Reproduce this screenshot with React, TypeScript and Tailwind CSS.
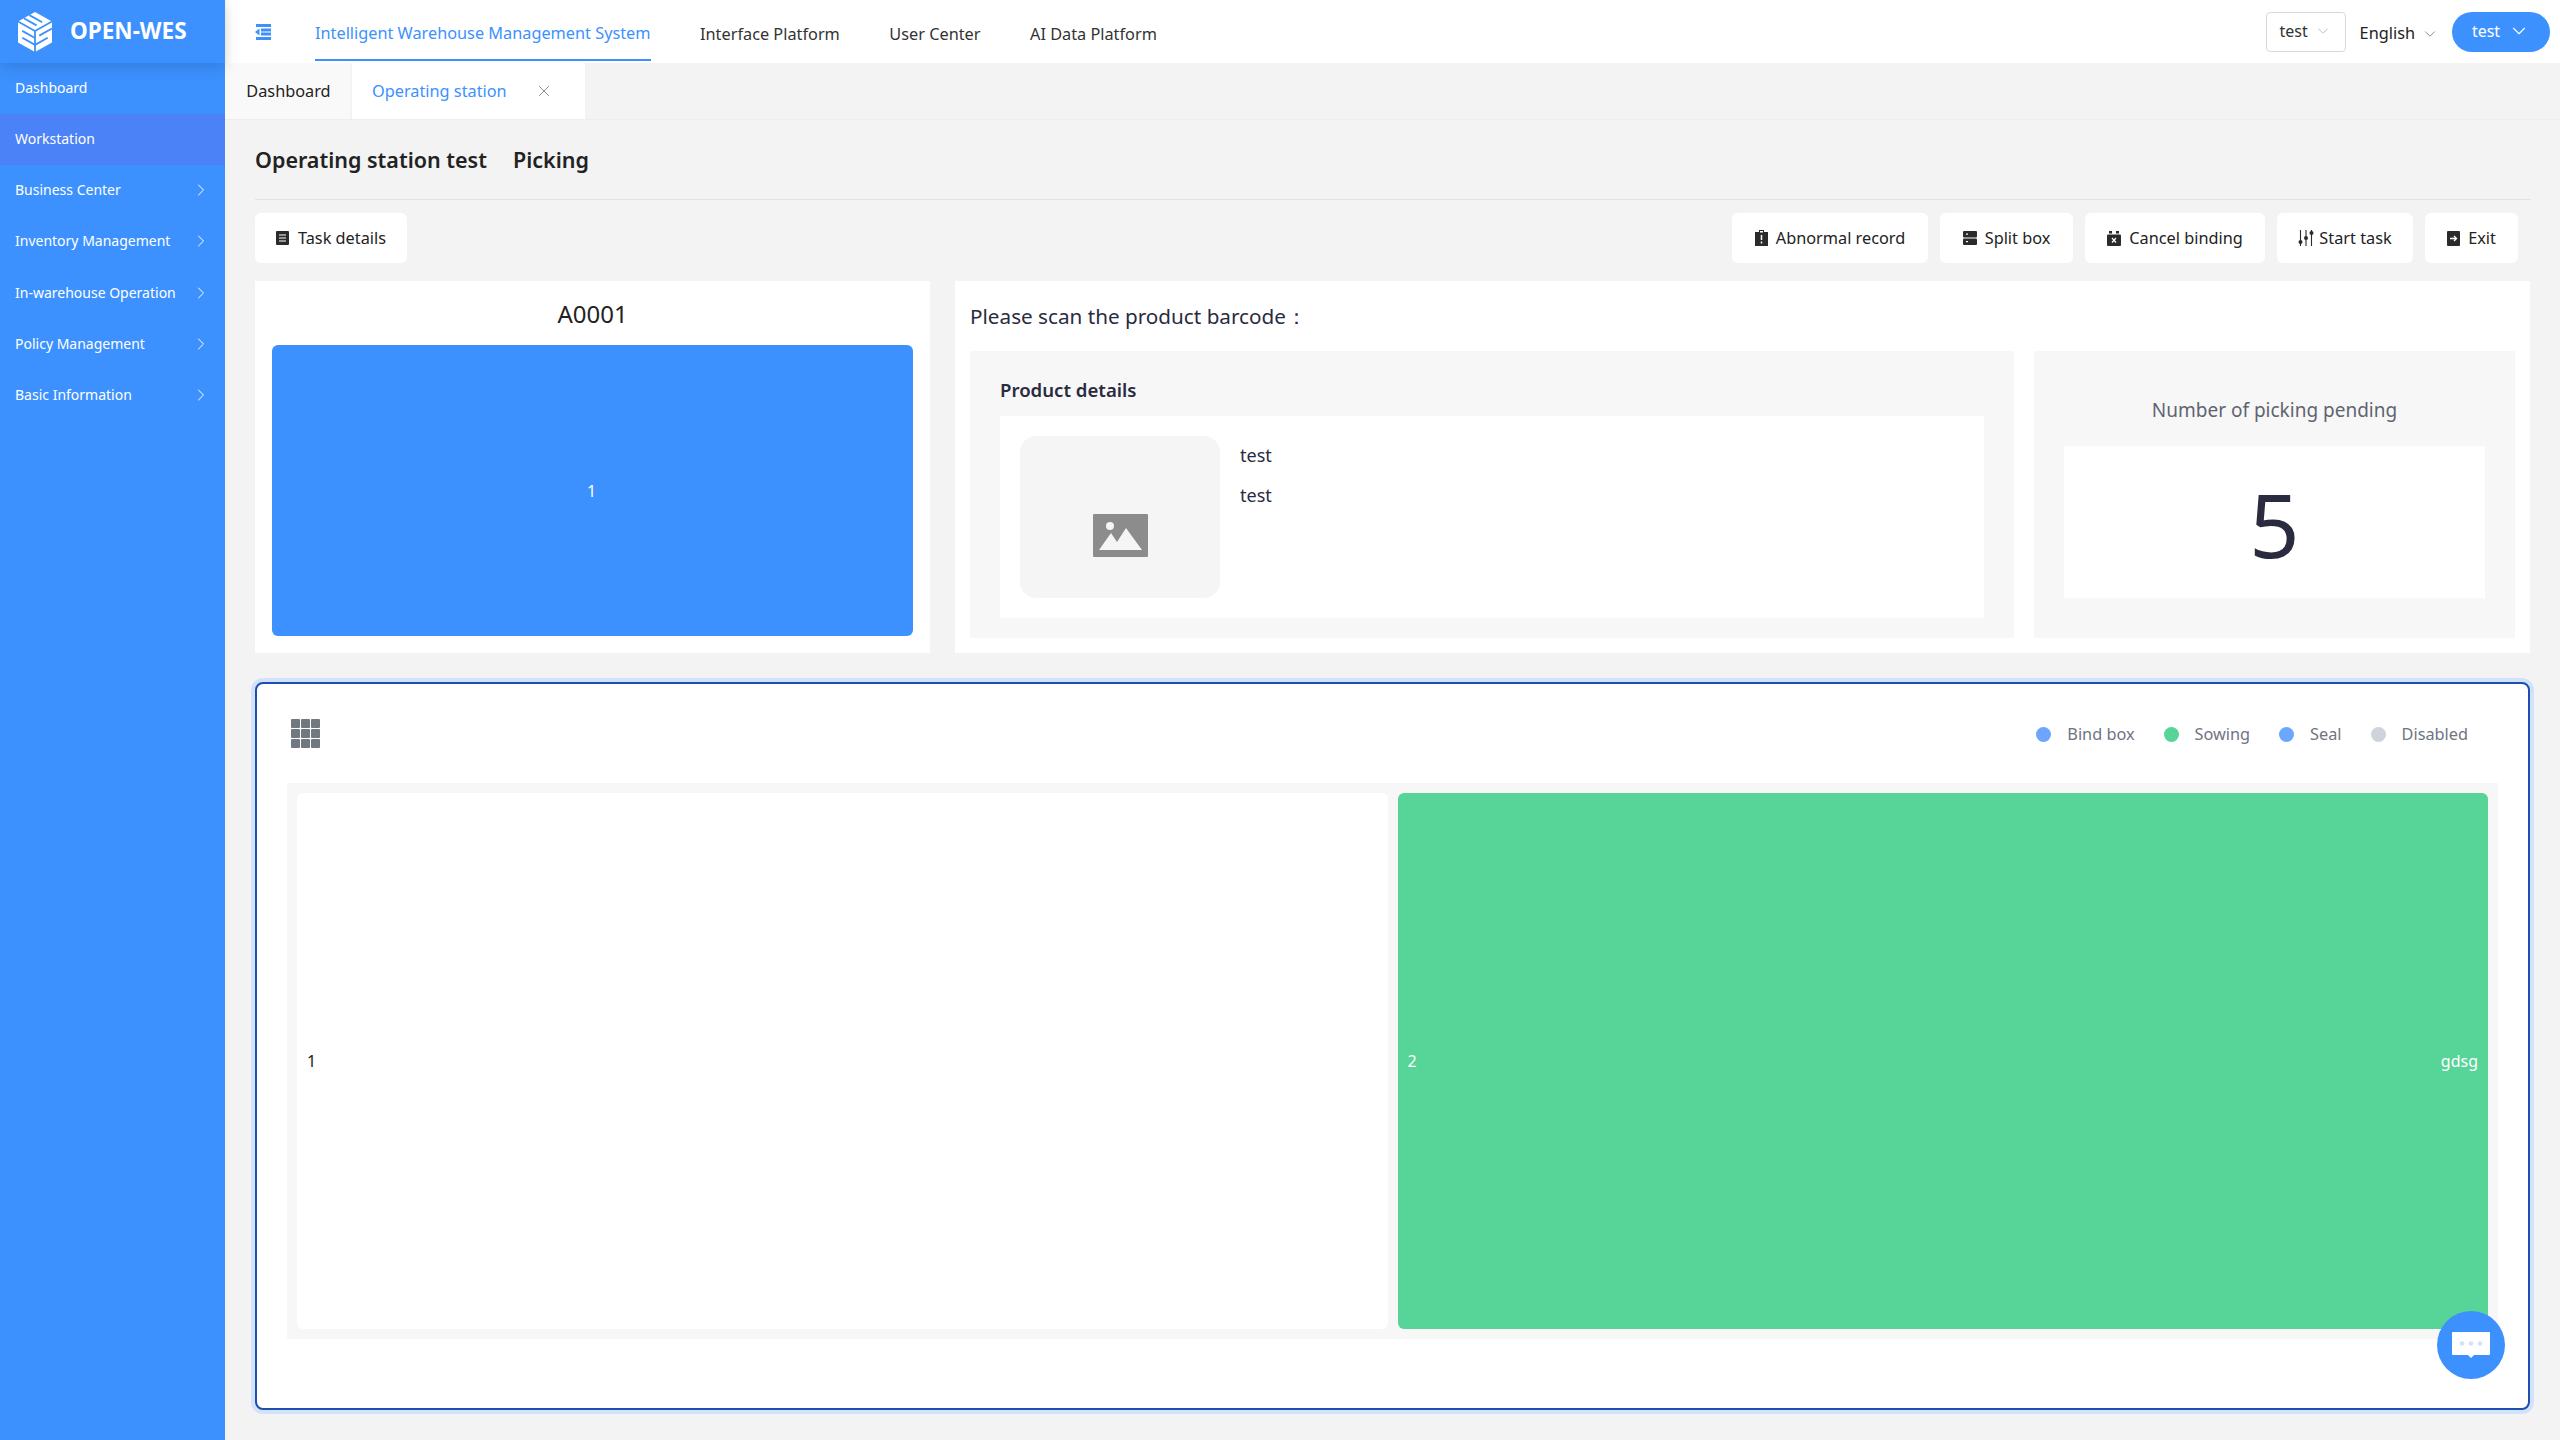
import { ChevronDown, ChevronRight, X } from "lucide-react";

const FONT = "font-['Noto_Sans',sans-serif]";
const MENU = ["Business Center", "Inventory Management", "In-warehouse Operation", "Policy Management", "Basic Information"];

function Logo() {
  return (
    <svg width="34" height="40" viewBox="0 0 34 40" fill="white">
      <path d="M17 0 34 9.500v21L17 40 0 30.500v-21z" />
      <g stroke="#3c91ff" strokeWidth="1.800" fill="none">
        {/* face seams */}
        <path d="M17 19v21M0 9.500 17 19 34 9.500" />
        {/* top face */}
        <path d="M11.400 3.100 24.150 10.200M5.800 6.300 18.550 13.400" />
        {/* left face */}
        <path d="M4.250 18.900 17 26M4.250 25.800 17 32.900" />
        {/* right face */}
        <path d="M21.250 23.600 34 16.500M17 32.900 29.750 25.700" />
      </g>
    </svg>
  );
}

function CollapseIcon() {
  return (
    <svg width="16" height="16" viewBox="0 0 16 16" fill="#3c91ff">
      <rect x="1" y="0" width="15" height="3" />
      <rect x="1" y="13" width="15" height="3" />
      <rect x="6" y="4.500" width="10" height="3" />
      <rect x="6" y="8.500" width="10" height="3" />
      <path d="M4.500 4.500v7L0 8z" />
    </svg>
  );
}

function ImageIcon() {
  return (
    <svg width="55" height="43" viewBox="0 0 55 43">
      <rect width="55" height="43" rx="1" fill="#8c8c8c" />
      <circle cx="17" cy="12" r="4" fill="#f5f5f5" />
      <path d="M6 36 18 19l6 9 9-14 16 22z" fill="#f5f5f5" />
    </svg>
  );
}

function GridIcon() {
  return (
    <svg width="29" height="29" viewBox="0 0 29 29" fill="#72787f">
      {[0, 10, 20].map((y) =>
        [0, 10, 20].map((x) => <rect key={`${x}-${y}`} x={x} y={y} width="9" height="9" rx="1" />)
      )}
    </svg>
  );
}

function BtnIcon({ name }: { name: string }) {
  const c = "#2b2b2b";
  if (name === "doc")
    return (
      <svg width="13" height="14" viewBox="0 0 13 14">
        <rect width="13" height="14" rx="1" fill={c} />
        <path d="M3 4h7M3 7h7M3 10h7" stroke="white" strokeWidth="1.200" />
      </svg>
    );
  if (name === "alert")
    return (
      <svg width="13" height="16" viewBox="0 0 13 16">
        <path d="M4 0h5v2h4v14H0V2h4z" fill={c} />
        <rect x="5" y="1" width="3" height="1.500" fill="white" />
        <path d="M6.500 5v5M6.500 11.500v2" stroke="white" strokeWidth="1.500" />
      </svg>
    );
  if (name === "split")
    return (
      <svg width="14" height="14" viewBox="0 0 14 14" fill={c}>
        <rect width="14" height="6.500" rx="1" />
        <rect y="7.500" width="14" height="6.500" rx="1" />
        <rect x="3" y="2.500" width="2" height="1.200" fill="white" />
        <rect x="3" y="10" width="2" height="1.200" fill="white" />
      </svg>
    );
  if (name === "cancel")
    return (
      <svg width="14" height="15" viewBox="0 0 14 15" fill={c}>
        <rect x="2" width="3" height="2.500" />
        <rect x="9" width="3" height="2.500" />
        <rect y="3.500" width="14" height="11.500" rx="1" />
        <path d="m5 7 4 4.500M9 7l-4 4.500" stroke="white" strokeWidth="1.200" />
      </svg>
    );
  if (name === "sliders")
    return (
      <svg width="16" height="16" viewBox="0 0 16 16" fill={c}>
        <path d="M2.500 0v16M8 0v16M13.500 0v16" stroke={c} strokeWidth="1.100" />
        <circle cx="2.500" cy="12" r="2" />
        <circle cx="8" cy="8" r="2" />
        <circle cx="13.500" cy="3" r="2" />
      </svg>
    );
  return (
    <svg width="13" height="15" viewBox="0 0 13 15">
      <rect width="13" height="15" rx="1" fill={c} />
      <path d="M3 7.500h6M7 5l2.500 2.500L7 10" stroke="white" strokeWidth="1.300" fill="none" />
    </svg>
  );
}

function ActionButton({ icon, label, gap = "gap-2", w }: { icon: string; label: string; gap?: string; w: string }) {
  return (
    <button className={`flex h-[50px] items-center justify-center rounded-md bg-white text-[16.3px] text-[#222] ${gap} ${w}`}>
      <BtnIcon name={icon} />
      {label}
    </button>
  );
}

function Legend({ color, label }: { color: string; label: string }) {
  return (
    <div className="flex items-center gap-4 text-[16.3px] text-[#6e7480]">
      <span className={`h-[15px] w-[15px] rounded-full ${color}`} />
      {label}
    </div>
  );
}

export default function App() {
  return (
    <div className={`flex h-[1440px] w-[2560px] overflow-hidden bg-[#f3f3f3] ${FONT}`}>
      {/* Sidebar */}
      <aside className="w-[225px] shrink-0 bg-[#3c91ff] text-sm text-white">
        <div className="relative z-10 flex h-[63px] items-center gap-[18px] pl-[18px] shadow-[0_6px_14px_rgba(0,0,0,0.12)]">
          <Logo />
          <span className="text-[22.500px] font-bold">OPEN-WES</span>
        </div>
        <div className="flex h-[51px] items-center px-[15px] pb-[2px]">Dashboard</div>
        <div className="flex h-[51px] items-center bg-[#4c82f7] px-[15px] pb-[1px]">Workstation</div>
        {MENU.map((m) => (
          <div key={m} className="flex h-[51.250px] items-center justify-between pb-[1px] pl-[15px] pr-[14px]">
            {m}
            <ChevronRight size={20} strokeWidth={1.200} />
          </div>
        ))}
      </aside>

      <div className="flex min-w-0 flex-1 flex-col">
        {/* Top nav */}
        <header className="flex h-[63px] items-center bg-white pl-[30px] pr-[10px] shadow-[inset_8px_0_8px_-8px_rgba(0,0,0,0.08)]">
          <CollapseIcon />
          <nav className="ml-[44px] flex h-full gap-[49.500px] text-[16.3px] text-[#333]">
            <div className="flex h-[61px] items-center border-b-2 border-[#3c91ff] pt-[7px] text-[#3c91ff]">Intelligent Warehouse Management System</div>
            <div className="flex items-center pt-[5px]">Interface Platform</div>
            <div className="flex items-center pt-[5px]">User Center</div>
            <div className="flex items-center pt-[5px]">AI Data Platform</div>
          </nav>
          <div className="ml-auto flex items-center text-base">
            <div className="flex h-[40px] w-[80px] items-center justify-center gap-[6px] rounded-sm border border-[#d9d9d9] pb-[2px] text-[#333]">
              test
              <ChevronDown size={18} strokeWidth={1} className="text-[#aaa]" />
            </div>
            <div className="ml-[14px] flex items-center gap-[6px] pt-1 text-[16.3px] text-[#222]">
              English
              <ChevronDown size={18} strokeWidth={1} className="text-[#666]" />
            </div>
            <div className="ml-[13px] flex h-[40px] w-[98px] items-center justify-center gap-[8px] rounded-[20px] bg-[#3c91ff] pb-[1px] text-white">
              test
              <ChevronDown size={22} strokeWidth={1.200} />
            </div>
          </div>
        </header>

        {/* Tabs */}
        <div className="flex h-[57px] items-stretch border-b border-[#eeeeee] text-[16.3px]">
          <div className="flex w-[125px] items-center justify-center bg-[#f9f9f9] pl-[2px] text-[#222]">Dashboard</div>
          <div className="ml-[2px] flex w-[233px] items-center gap-[28px] bg-white pl-[20px] text-[#3c91ff]">
            Operating station
            <X size={18} strokeWidth={1} className="text-[#666]" />
          </div>
        </div>

        {/* Page */}
        <main className="flex flex-1 flex-col pl-[30px] pr-[30px]">
          <div className="-mr-px flex h-[80px] items-center gap-[26px] border-b border-[#e3e3e3] pt-[2px] text-[21.500px] font-semibold text-[#222]">
            <span>Operating station test</span>
            <span>Picking</span>
          </div>

          <div className="mt-[13px] flex justify-between pr-[12px]">
            <ActionButton icon="doc" label="Task details" gap="gap-[9px]" w="w-[152px]" />
            <div className="flex gap-[12px]">
              <ActionButton icon="alert" label="Abnormal record" w="w-[196px]" />
              <ActionButton icon="split" label="Split box" w="w-[133px]" />
              <ActionButton icon="cancel" label="Cancel binding" w="w-[180px]" />
              <ActionButton icon="sliders" label="Start task" gap="gap-[5px]" w="w-[136px]" />
              <ActionButton icon="exit" label="Exit" w="w-[93px]" />
            </div>
          </div>

          <div className="mt-[18px] flex h-[372px] gap-[25px]">
            <section className="flex w-[675px] flex-col bg-white px-[17px] pb-[17px]">
              <div className="flex h-[64px] items-center justify-center pt-[2px] text-2xl text-[#222]">A0001</div>
              <div className="flex flex-1 items-center justify-center rounded-md bg-[#3c91ff] pr-[2px] text-base text-white">1</div>
            </section>
            <section className="flex flex-1 flex-col bg-white px-[15px] pb-[15px]">
              <div className="flex h-[70px] items-center pt-[1px] text-[20.700px] text-[#2a2b3f]">Please scan the product barcode：</div>
              <div className="flex flex-1 gap-[20px]">
                <div className="flex flex-1 flex-col bg-[#f7f7f7] px-[30px] pb-[20px]">
                  <div className="flex h-[65px] items-center pt-[12px] text-[18.600px] font-semibold text-[#2a2b3f]">Product details</div>
                  <div className="flex flex-1 gap-[20px] bg-white p-[20px]">
                    <div className="flex h-[162px] w-[200px] items-center justify-center rounded-2xl bg-[#f5f5f5] pt-[36px]">
                      <ImageIcon />
                    </div>
                    <div className="flex flex-col gap-[16px] pt-[7px] text-lg text-[#2a2b3f]">
                      <span className="leading-[24px]">test</span>
                      <span className="leading-[24px]">test</span>
                    </div>
                  </div>
                </div>
                <div className="flex w-[481px] flex-col bg-[#f7f7f7] px-[30px] pb-[40px]">
                  <div className="flex h-[95px] items-center justify-center pt-[23px] text-[19px] text-[#5f6470]">Number of picking pending</div>
                  <div className="flex flex-1 items-center justify-center bg-white pt-[3px] text-[88px] leading-none font-normal text-[#2a2b3f]">5</div>
                </div>
              </div>
            </section>
          </div>

          {/* Wall */}
          <section className="relative mt-[29px] flex h-[728px] flex-col rounded-lg border-2 border-[#1e4fae] bg-white px-[30px] shadow-[0_0_0_4px_#d2e2fb]">
            <div className="flex h-[99px] items-center justify-between pl-[4px] pr-[30px]">
              <GridIcon />
              <div className="flex gap-[29px] pt-[2px]">
                <Legend color="bg-[#6ca6ff]" label="Bind box" />
                <Legend color="bg-[#57d497]" label="Sowing" />
                <Legend color="bg-[#6ca6ff]" label="Seal" />
                <Legend color="bg-[#cfd3dc]" label="Disabled" />
              </div>
            </div>
            <div className="grid h-[556px] grid-cols-2 gap-[10px] bg-[#f7f7f7] p-[10px] text-base">
              <div className="flex items-center justify-between rounded-md bg-white px-[10px] text-[#222]">1</div>
              <div className="flex items-center justify-between rounded-md bg-[#57d497] px-[10px] text-white">
                <span>2</span>
                <span>gdsg</span>
              </div>
            </div>
            {/* Chat bubble */}
            <div className="absolute bottom-[29px] right-[23px] flex h-[68px] w-[68px] items-center justify-center rounded-full bg-[#3c91ff]">
              <svg width="38" height="26" viewBox="0 0 38 26">
                <path d="M1 0h36a1 1 0 0 1 1 1v21a1 1 0 0 1-1 1H22l-3 3-3-3H1a1 1 0 0 1-1-1V1a1 1 0 0 1 1-1z" fill="white" />
                <circle cx="10" cy="11.500" r="2.300" fill="#cfe3ff" />
                <circle cx="19" cy="11.500" r="2.300" fill="#cfe3ff" />
                <circle cx="28" cy="11.500" r="2.300" fill="#cfe3ff" />
              </svg>
            </div>
          </section>
        </main>
      </div>
    </div>
  );
}
